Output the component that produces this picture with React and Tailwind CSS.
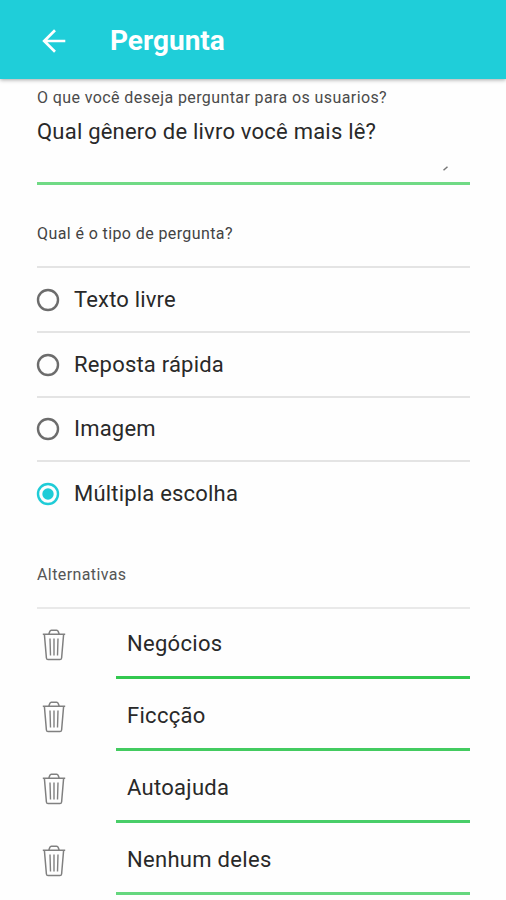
const types = [
  { label: "Texto livre", spacing: "tracking-[0.17px]" },
  { label: "Reposta rápida", spacing: "tracking-[0.2px]" },
  { label: "Imagem", spacing: "tracking-[0.2px]" },
  { label: "Múltipla escolha", spacing: "tracking-[0.2px]", checked: true },
];

const answers = [
  { label: "Negócios", line: "border-[#33c84f]" },
  { label: "Ficcção", line: "border-[#43cb60]" },
  { label: "Autoajuda", line: "border-[#49ce69]" },
  { label: "Nenhum deles", line: "border-[#65d77e]" },
];

function BackArrow() {
  return (
    <svg className="h-6 w-6" viewBox="0 0 24 24" fill="none" stroke="#fff" strokeWidth="2.7">
      <path d="M23.3 12H2.5M13 1.2 2.2 12 13 22.8" />
    </svg>
  );
}

function Radio({ checked }) {
  return (
    <svg className="h-6 w-6 shrink-0" viewBox="0 0 24 24" fill="none">
      <circle cx="12" cy="12" r="10" stroke={checked ? "#1fccd7" : "#6c6c6c"} strokeWidth="2.4" />
      {checked && <circle cx="12" cy="12" r="5.7" fill="#1fccd7" />}
    </svg>
  );
}

function Trash() {
  return (
    <svg className="h-8 w-6 shrink-0" viewBox="0 0 24 32" fill="none" stroke="#808080" strokeWidth="1.5">
      <path d="M.8 5.2h22.4M6.8 5l1-2.6Q8.2 1.3 9.4 1.3h5.2q1.2 0 1.6 1.1l1 2.6" />
      <path d="M2.4 5.5 4.4 29q.2 1.6 1.6 1.6h12q1.4 0 1.6-1.6l2-23.5" />
      <path strokeWidth="1.4" d="m8 9.5.5 17M12 9.5v17M16 9.5l-.5 17" />
    </svg>
  );
}

export default function App() {
  return (
    <main className="h-[900px] w-[506px] overflow-hidden bg-[#fefefe] font-[Roboto,sans-serif] text-[#292929]">
      <header className="relative flex h-[79px] items-center bg-[#1fced9] pl-[42px] pt-[3px] shadow-[0_1px_4px_rgba(0,0,0,0.35)]">
        <BackArrow />
        <h1 className="ml-[44px] text-[28px] leading-8 font-bold text-white">Pergunta</h1>
      </header>
      <div className="pr-[36px] pl-[37px]">
        <section className="flex h-[106px] flex-col border-b-[3px] border-[#70da85] pt-[9px]">
          <label className="h-5 text-[16px] leading-5 tracking-[0.4px] whitespace-nowrap text-[#4b4b4b]">O que você deseja perguntar para os usuarios?</label>
          <div className="mt-[10px] h-7 text-[22px] leading-7 tracking-[0.22px] whitespace-nowrap">Qual gênero de livro você mais lê?</div>
          <svg className="mt-[20px] mr-[22px] h-[5px] w-[5px] self-end" viewBox="0 0 5 5" stroke="#777" strokeWidth="1.5">
            <path d="M.5 4.3 4.5.7" />
          </svg>
        </section>
        <h2 className="h-[81px] pt-[39px] text-[16px] leading-5 tracking-[0.4px] text-[#434343]">Qual é o tipo de pergunta?</h2>
        <section>
          {types.map((t) => (
            <div key={t.label} className="flex h-[64.8px] items-center border-t-2 border-[#e4e4e4]">
              <span className="-ml-px flex pt-px"><Radio checked={t.checked} /></span>
              <span className={`ml-[14px] pt-px text-[22px] leading-7 ${t.spacing}`}>{t.label}</span>
            </div>
          ))}
        </section>
        <h2 className="h-[82px] pt-[40px] text-[16px] leading-5 tracking-[0.4px] text-[#555]">Alternativas</h2>
        <section className="border-t-2 border-[#e9e9e9]">
          <div className="-mt-[1.6px]">
            {answers.map((a) => (
              <div key={a.label} className="flex h-[71.9px]">
                <span className="mt-[21.5px] ml-[5px]"><Trash /></span>
                <div className={`ml-[50px] flex-1 border-b-[3px] pt-[22.6px] pl-[11px] text-[22px] leading-7 tracking-[0.3px] ${a.line}`}>{a.label}</div>
              </div>
            ))}
          </div>
        </section>
      </div>
    </main>
  );
}
